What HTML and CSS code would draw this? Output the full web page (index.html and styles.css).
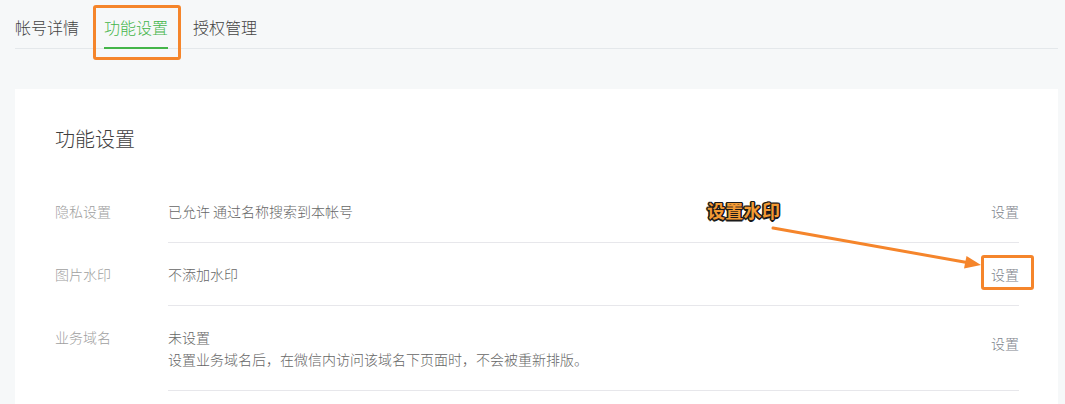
FILE: index.html
```html
<!DOCTYPE html>
<html lang="zh-CN">
<head>
<meta charset="utf-8">
<title>功能设置</title>
<link rel="stylesheet" href="styles.css">
</head>
<body>
<div class="page">
  <nav class="tabs">
    <a class="tab">帐号详情</a>
    <a class="tab tab-active">功能设置</a>
    <a class="tab">授权管理</a>
  </nav>
  <section class="card">
    <h2 class="card-title">功能设置</h2>
    <div class="row">
      <div class="row-label">隐私设置</div>
      <div class="row-body">
        <div class="row-content">已允许 通过名称搜索到本帐号</div>
        <a class="row-action">设置</a>
      </div>
    </div>
    <div class="row">
      <div class="row-label">图片水印</div>
      <div class="row-body">
        <div class="row-content">不添加水印</div>
        <a class="row-action">设置</a>
      </div>
    </div>
    <div class="row">
      <div class="row-label">业务域名</div>
      <div class="row-body row-body-multi">
        <div class="row-content">未设置<br>设置业务域名后，在微信内访问该域名下页面时，不会被重新排版。</div>
        <a class="row-action row-action-mid">设置</a>
      </div>
    </div>
  </section>
</div>

<div class="mark mark-tab"></div>
<div class="mark mark-action"></div>
<div class="note">设置水印</div>
<svg class="arrow" width="1065" height="404" viewBox="0 0 1065 404">
  <line x1="773" y1="228" x2="967" y2="262.5" stroke="#f5852b" stroke-width="3" stroke-linecap="round"/>
  <polygon points="981,265 964,268.5 966.5,256" fill="#f5852b"/>
</svg>
</body>
</html>
```

FILE: styles.css
```css
html, body {
  margin: 0;
  padding: 0;
}
body {
  background: #f6f8f9;
  font-family: "Noto Sans CJK SC", "Noto Sans", sans-serif;
  color: #353535;
  width: 1065px;
  height: 404px;
  overflow: hidden;
  position: relative;
}
.page {
  padding: 0 7px 0 15px;
}
.tabs {
  display: flex;
  gap: 25px;
  height: 48px;
  border-bottom: 1px solid #e4e8eb;
}
.tab {
  display: block;
  font-size: 16px;
  line-height: 24px;
  padding-top: 15px;
  height: 32px;
  color: #444444;
  font-weight: 300;
  border-bottom: 2px solid transparent;
}
.tab-active {
  color: #44b549;
  border-bottom-color: #44b549;
}
.card {
  margin-top: 40px;
  background: #ffffff;
  padding: 35px 39px 13px 40px;
}
.card-title {
  margin: 0 0 26px;
  font-size: 20px;
  line-height: 30px;
  font-weight: 300;
  color: #3e3e3e;
}
.row {
  display: flex;
  font-size: 14px;
  line-height: 22px;
  font-weight: 300;
}
.row-label {
  width: 113px;
  flex: none;
  padding-top: 20px;
  color: #a0a0a0;
}
.row-body {
  flex: 1;
  display: flex;
  align-items: flex-start;
  justify-content: space-between;
  padding: 20px 0;
  border-bottom: 1px solid #e7e7eb;
}
.row-content {
  color: #666666;
}
.row-action {
  color: #80848c;
}
.row-action-mid {
  margin-top: 6px;
}
.mark {
  position: absolute;
  border: 3px solid #f5852b;
  border-radius: 3px;
  box-sizing: border-box;
}
.mark-tab {
  left: 93px;
  top: 5px;
  width: 88px;
  height: 55px;
}
.mark-action {
  left: 981px;
  top: 255px;
  width: 53px;
  height: 35px;
}
.note {
  position: absolute;
  left: 707px;
  top: 198px;
  font-size: 18px;
  line-height: 24px;
  font-weight: bold;
  color: #f39a34;
  letter-spacing: 0.3px;
  text-shadow: 1px 1px 0 #1a1a1a, -1px -1px 0 #1a1a1a, 1px -1px 0 #1a1a1a, -1px 1px 0 #1a1a1a,
    0 1.5px 0 #1a1a1a, 0 -1.5px 0 #1a1a1a, 1.5px 0 0 #1a1a1a, -1.5px 0 0 #1a1a1a;
}
.arrow {
  position: absolute;
  left: 0;
  top: 0;
  pointer-events: none;
}
```
